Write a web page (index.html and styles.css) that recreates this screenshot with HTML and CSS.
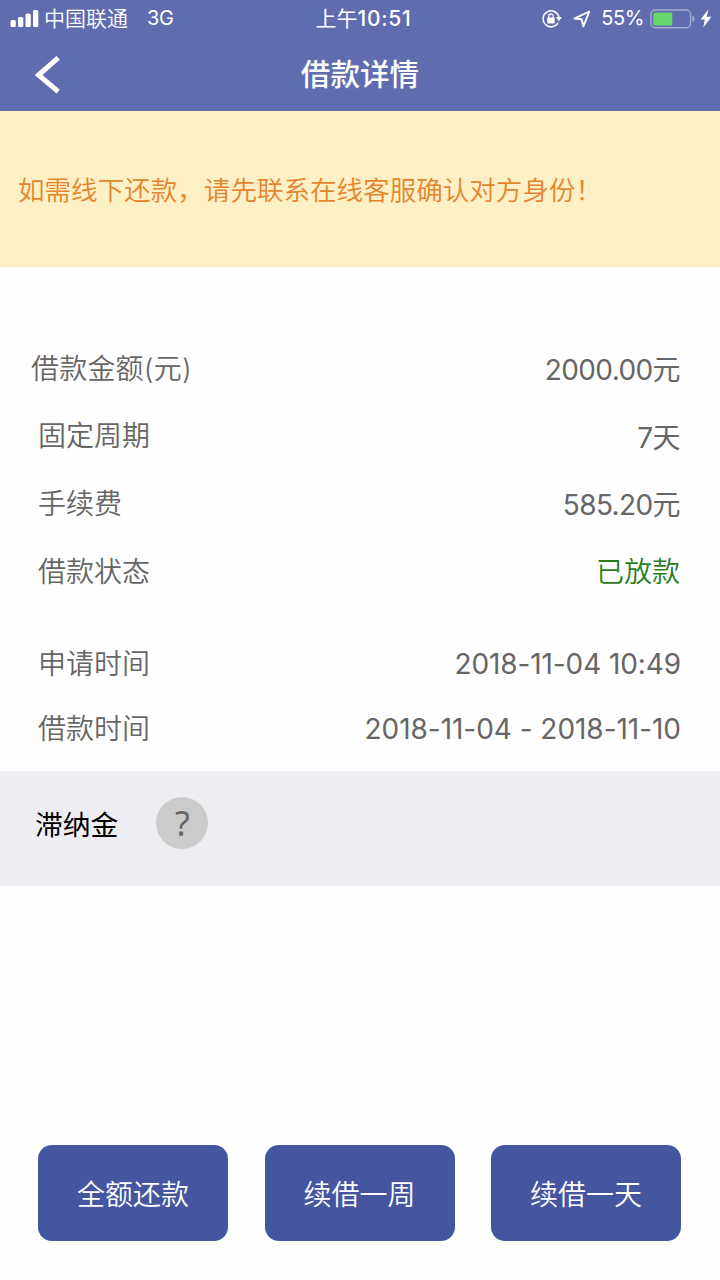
FILE: index.html
```html
<!DOCTYPE html>
<html lang="zh-CN">
<head>
<meta charset="utf-8">
<title>借款详情</title>
<link rel="stylesheet" href="styles.css">
</head>
<body>
<div class="screen">
  <header class="header">
    <div class="status">
      <div class="status-left">
        <svg class="signal" width="29" height="19" viewBox="0 0 29 19" fill="currentColor">
          <rect x="0.5" y="11" width="5.3" height="7" rx="1.6"/>
          <rect x="8" y="8" width="5.3" height="10" rx="1.6"/>
          <rect x="15.5" y="4.5" width="5.3" height="13.5" rx="1.6"/>
          <rect x="23" y="1" width="5.3" height="17" rx="1.6"/>
        </svg>
        <span class="carrier">中国联通</span>
        <span class="network">3G</span>
      </div>
      <div class="clock">上午<b>10:51</b></div>
      <div class="status-right">
        <svg class="lock" width="20" height="20" viewBox="0 0 20 20" fill="none" stroke="currentColor">
          <path d="M16.2 13.5A8 8 0 1 1 17 8.6" stroke-width="1.6"/>
          <path d="M13.8 8H20l-3.1 4.3z" fill="currentColor" stroke="none"/>
          <rect x="5.3" y="8.4" width="7.4" height="6" rx=".7" fill="currentColor" stroke="none"/>
          <path d="M6.8 9V7.2a2.2 2.2 0 0 1 4.4 0V9" stroke-width="1.3"/>
        </svg>
        <svg class="arrow" width="18" height="18" viewBox="0 0 18 18" fill="none" stroke="currentColor" stroke-width="1.9" stroke-linejoin="round">
          <path d="M16.3 1.5 10.4 16.3 8.6 9.2 1.4 8.6z"/>
        </svg>
        <span class="percent">55%</span>
        <svg class="battery" width="45" height="20" viewBox="0 0 45 20">
          <rect x="1" y="1" width="39.5" height="17.7" rx="4" fill="none" stroke="#a3abd5" stroke-width="1.4"/>
          <rect x="3.3" y="3.4" width="19" height="13" rx="1.5" fill="#67d66a"/>
          <path d="M42.3 6.5q2.3 1 2.3 3.4t-2.3 3.4z" fill="#a3abd5"/>
        </svg>
        <svg class="bolt" width="12" height="19" viewBox="0 0 12 19" fill="currentColor">
          <path d="M8.3.5.5 10.6h4.3L3.3 18.5 11.5 7.8H6.7z"/>
        </svg>
      </div>
    </div>
    <div class="navbar">
      <svg class="back" width="28" height="40" viewBox="0 0 28 40" fill="none" stroke="currentColor" stroke-width="5">
        <path d="M24.2 3.8 4.5 21 24.2 37.6"/>
      </svg>
      <h1 class="title">借款详情</h1>
    </div>
  </header>
  <div class="notice">如需线下还款，请先联系在线客服确认对方身份！</div>
  <main class="details">
    <div class="row row-amount"><span class="label">借款金额(元)</span><span class="value value-low">2000.00元</span></div>
    <div class="row"><span class="label">固定周期</span><span class="value value-low">7天</span></div>
    <div class="row"><span class="label">手续费</span><span class="value value-low">585.20元</span></div>
    <div class="row row-status"><span class="label">借款状态</span><span class="value value-paid">已放款</span></div>
    <div class="row row-date row-apply"><span class="label">申请时间</span><span class="value value-time">2018-11-04 10:49</span></div>
    <div class="row row-date"><span class="label">借款时间</span><span class="value value-range">2018-11-04 - 2018-11-10</span></div>
  </main>
  <section class="late-fee">
    <span class="late-label">滞纳金</span>
    <span class="help">?</span>
  </section>
  <footer class="actions">
    <button class="action">全额还款</button>
    <button class="action">续借一周</button>
    <button class="action">续借一天</button>
  </footer>
</div>
</body>
</html>
```
FILE: styles.css
```css
* { box-sizing: border-box; }
body {
  margin: 0;
  background: #fefefe;
  font-family: Inter, "Noto Sans CJK SC", sans-serif;
  font-weight: 350;
}
svg { display: block; flex: none; }
.screen {
  width: 720px;
  height: 1280px;
  display: flex;
  flex-direction: column;
  overflow: hidden;
}
.header {
  height: 111px;
  background: #5f6db0;
  color: #fff;
}
.status {
  height: 37px;
  display: grid;
  grid-template-columns: 240px 1fr 240px;
  align-items: center;
  font-size: 20px;
  line-height: 37px;
}
.status-left, .status-right { display: flex; align-items: center; }
.status-left { padding-left: 10px; }
.carrier { margin-left: 5px; font-size: 21px; }
.network { margin-left: 19px; font-size: 20px; font-weight: 400; letter-spacing: -0.3px; }
.clock { text-align: center; padding-left: 7px; font-size: 21px; font-weight: 400; white-space: nowrap; }
.clock b { font-weight: 500; letter-spacing: 0.7px; }
.status-right { justify-content: flex-end; padding-right: 8px; }
.arrow { margin-left: 11px; }
.percent { margin-left: 10px; font-weight: 400; letter-spacing: -0.4px; }
.battery { margin-left: 6px; }
.bolt { margin-left: 5px; }
.navbar {
  height: 74px;
  display: grid;
  grid-template-columns: 120px 1fr 120px;
  align-items: center;
}
.back { margin-left: 34px; }
.title {
  margin: 0;
  text-align: center;
  font-size: 29.6px;
  line-height: 74px;
  font-weight: 500;
}
.notice {
  height: 156px;
  padding-left: 18px;
  background: #fdf0c5;
  color: #e4852f;
  font-size: 26.55px;
  line-height: 158px;
  white-space: nowrap;
}
.details {
  height: 504px;
  padding: 68px 40px 0 38px;
  color: #666;
}
.row {
  height: 67.5px;
  display: flex;
  justify-content: space-between;
  align-items: center;
  font-size: 28px;
  line-height: 40px;
  white-space: nowrap;
}
.row-amount .label { margin-left: -7px; letter-spacing: 0.2px; }
.value { font-weight: 400; }
.value-low { padding-top: 3px; letter-spacing: -0.6px; }
.row-status { padding-top: 2px; }
.value-paid { color: #2a7d1f; font-weight: 350; }
.row-date { height: 65px; padding-top: 1px; }
.row-apply { margin-top: 26px; }
.value-time { margin-right: -1px; letter-spacing: -0.1px; }
.value-range { margin-right: -1px; letter-spacing: -0.04px; }
.late-fee {
  height: 115px;
  padding: 0 0 11px 35px;
  display: flex;
  align-items: center;
  gap: 38px;
  background: #eeedf2;
  color: #000;
  font-size: 27.8px;
}
.late-label { font-weight: 400; }
.help {
  width: 52px;
  height: 52px;
  border-radius: 50%;
  background: #cbcbcb;
  color: #666;
  font: 400 34px/52px "Noto Sans", sans-serif;
  text-align: center;
}
.actions {
  margin-top: 259px;
  padding: 0 39px 0 38px;
  display: grid;
  grid-template-columns: repeat(3, 1fr);
  gap: 36.5px;
}
.action {
  height: 96px;
  padding: 0;
  border: 0;
  border-radius: 14px;
  background: #43569f;
  color: #fff;
  font: inherit;
  font-size: 28px;
}
```
